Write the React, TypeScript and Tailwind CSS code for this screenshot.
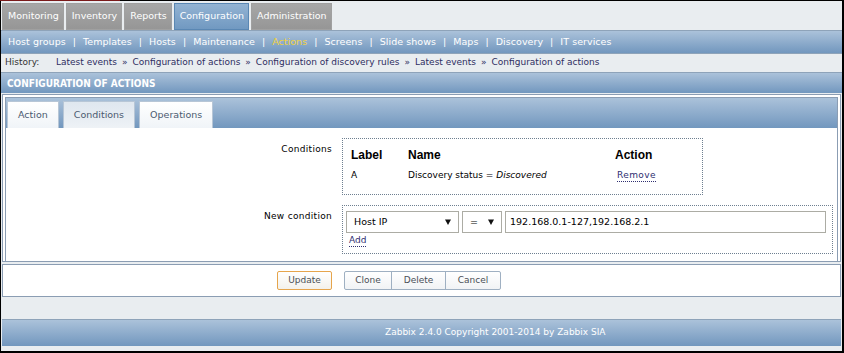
import React from "react";

const MAIN_MENU = ["Monitoring", "Inventory", "Reports", "Configuration", "Administration"];
const SUB_MENU = [
	"Host groups",
	"Templates",
	"Hosts",
	"Maintenance",
	"Actions",
	"Screens",
	"Slide shows",
	"Maps",
	"Discovery",
	"IT services",
];
const HISTORY = [
	"Latest events",
	"Configuration of actions",
	"Configuration of discovery rules",
	"Latest events",
	"Configuration of actions",
];

const blueBar = "bg-gradient-to-b from-[#abc2da] to-[#7297be]";

function SelectBox({ label, width }: { label: string; width: string }) {
	return (
		<div
			className={`${width} h-[22px] border border-[#acaca4] bg-white flex items-center justify-between pl-[7px] pr-[7px]`}
		>
			<span className="text-[9.5px] text-black">{label}</span>
			<svg viewBox="0 0 6 6" className="w-[6px] h-[6px]">
				<path d="M0 0.5h6L3 6z" fill="#111" />
			</svg>
		</div>
	);
}

export default function App() {
	return (
		<div
			className="w-[844px] h-[353px] bg-black overflow-hidden flex flex-col"
			style={{ fontFamily: '"DejaVu Sans", Verdana, sans-serif' }}
		>
			{/* top edge */}
			<div className="h-px flex shrink-0">
				<div className="w-[120px] bg-[#7a1a1a]" />
			</div>

			<div className="flex-1 ml-px mr-[2px] mb-[2px] bg-[#e9edf0] flex flex-col">
				{/* Main menu */}
				<div className="h-[29px] flex items-end gap-[2px] pl-px pt-px">
					{MAIN_MENU.map((item) => (
						<div
							key={item}
							className={`h-[27px] pl-[5px] pr-[4px] flex items-center text-[9.5px] text-white ${
								item === "Configuration"
									? "bg-gradient-to-b from-[#93b3d3] to-[#7199c1] border border-[#5a87b3]"
									: "bg-gradient-to-b from-[#a7a7a7] to-[#969696] border border-[#a0a0a0]"
							}`}
						>
							{item}
						</div>
					))}
				</div>

				{/* Sub menu */}
				<div
					className={`h-[24px] ${blueBar} border-t border-b border-[#8ea3b9] flex items-center pl-[7px] text-[9.5px] text-white tracking-[0.05px]`}
				>
					{SUB_MENU.map((item, i) => (
						<React.Fragment key={item}>
							{i > 0 && <span className="mx-[7px]">|</span>}
							<span className={item === "Actions" ? "text-[#f2d23e]" : ""}>{item}</span>
						</React.Fragment>
					))}
				</div>

				{/* History */}
				<div className="h-[19px] border-b border-[#8ea3b9] flex items-center pl-[4px] text-[9px] text-[#2e2e62]">
					<span className="w-[51px] text-[#333]">History:</span>
					{HISTORY.map((h, i) => (
						<React.Fragment key={i}>
							{i > 0 && <span className="mx-[5px]">»</span>}
							<span>{h}</span>
						</React.Fragment>
					))}
				</div>

				{/* Title */}
				<div
					className={`h-[20px] ${blueBar} flex items-center pl-[6px] text-[10px] font-bold text-white`}
					style={{ fontFamily: '"DejaVu Sans Condensed", "DejaVu Sans", sans-serif', fontStretch: "condensed" }}
				>
					CONFIGURATION OF ACTIONS
				</div>

				{/* Form frame */}
				<div className="mt-px mx-px border border-[#8b9db3] bg-white p-[2px] pb-0 flex flex-col">
					<div className={`h-[31px] ${blueBar} flex items-end gap-[4px] pl-px border border-[#8b9db3] border-b-0`}>
						{["Action", "Conditions", "Operations"].map((t) => (
							<div
								key={t}
								className={`h-[27px] px-[10px] flex items-center text-[9.5px] text-[#4b5a70] border border-b-0 border-[#b7c6d6] ${
									t === "Conditions"
										? "bg-gradient-to-b from-[#dfe7ef] to-[#eef2f6]"
										: "bg-gradient-to-b from-[#ffffff] to-[#f0f4f8]"
								}`}
							>
								{t}
							</div>
						))}
					</div>

					<div className="border-l border-r border-[#8b9db3] bg-white h-[133px] pt-[10px]">
						<div className="grid grid-cols-[326px_1fr] gap-x-[10px] gap-y-[10px] text-[9px] text-black">
							<div className="text-right pt-[5px] tracking-[0.3px]">Conditions</div>
							<div className="w-[361px] h-[57px] border border-dotted border-[#6e7f90] pl-[8px] pt-[7px]">
								<div
									className="flex text-[12px] font-bold h-[16px]"
									style={{ fontFamily: '"Liberation Sans", Arial, sans-serif' }}
								>
									<span className="w-[57px]">Label</span>
									<span className="w-[207px]">Name</span>
									<span>Action</span>
								</div>
								<div className="flex mt-[7px] h-[14px] items-center">
									<span className="w-[57px]">A</span>
									<span className="w-[209px]">
										Discovery status = <i>Discovered</i>
									</span>
									<span className="text-[#2e2e70] border-b border-dotted border-[#2e2e70] leading-[11px] tracking-[0.4px]">
										Remove
									</span>
								</div>
							</div>

							<div className="text-right pt-[5px] tracking-[0.3px]">New condition</div>
							<div className="w-[491px] h-[49px] border border-dotted border-[#6e7f90] pl-[3px] pt-[5px]">
								<div className="flex gap-[3px]">
									<SelectBox label="Host IP" width="w-[113px]" />
									<SelectBox label="=" width="w-[40px]" />
									<div className="w-[321px] h-[22px] border border-[#acaca4] flex items-center pl-[4px] text-[9.5px]">
										192.168.0.1-127,192.168.2.1
									</div>
								</div>
								<span className="inline-block ml-[3px] mt-[2px] text-[#2e2e70] border-b border-dotted border-[#2e2e70] leading-[11px]">
									Add
								</span>
							</div>
						</div>
					</div>
				</div>

				{/* Buttons */}
				<div className="mt-[2px] mx-px border border-[#8b9db3] bg-white h-[33px] flex items-center text-[9px] text-[#4a4f56]">
					<button className="ml-[274px] w-[55px] h-[19px] border border-[#e6a54c] rounded-[2px] bg-gradient-to-b from-white to-[#f3f1ec] text-[#4a4f56]">
						Update
					</button>
					<div className="ml-[12px] flex h-[19px] border border-[#9fb0c2] rounded-[2px] bg-gradient-to-b from-white to-[#f1f3f5]">
						<button className="w-[47px] border-r border-[#9fb0c2]">Clone</button>
						<button className="w-[54px] border-r border-[#9fb0c2]">Delete</button>
						<button className="w-[54px]">Cancel</button>
					</div>
				</div>

				<div className="flex-1" />

				{/* Footer */}
				<div
					className={`h-[27px] mb-[5px] mx-px ${blueBar} border-t border-[#8ea3b9] flex items-center pl-[383px] text-[9px] text-white`}
				>
					Zabbix 2.4.0 Copyright 2001-2014 by Zabbix SIA
				</div>
			</div>
		</div>
	);
}
